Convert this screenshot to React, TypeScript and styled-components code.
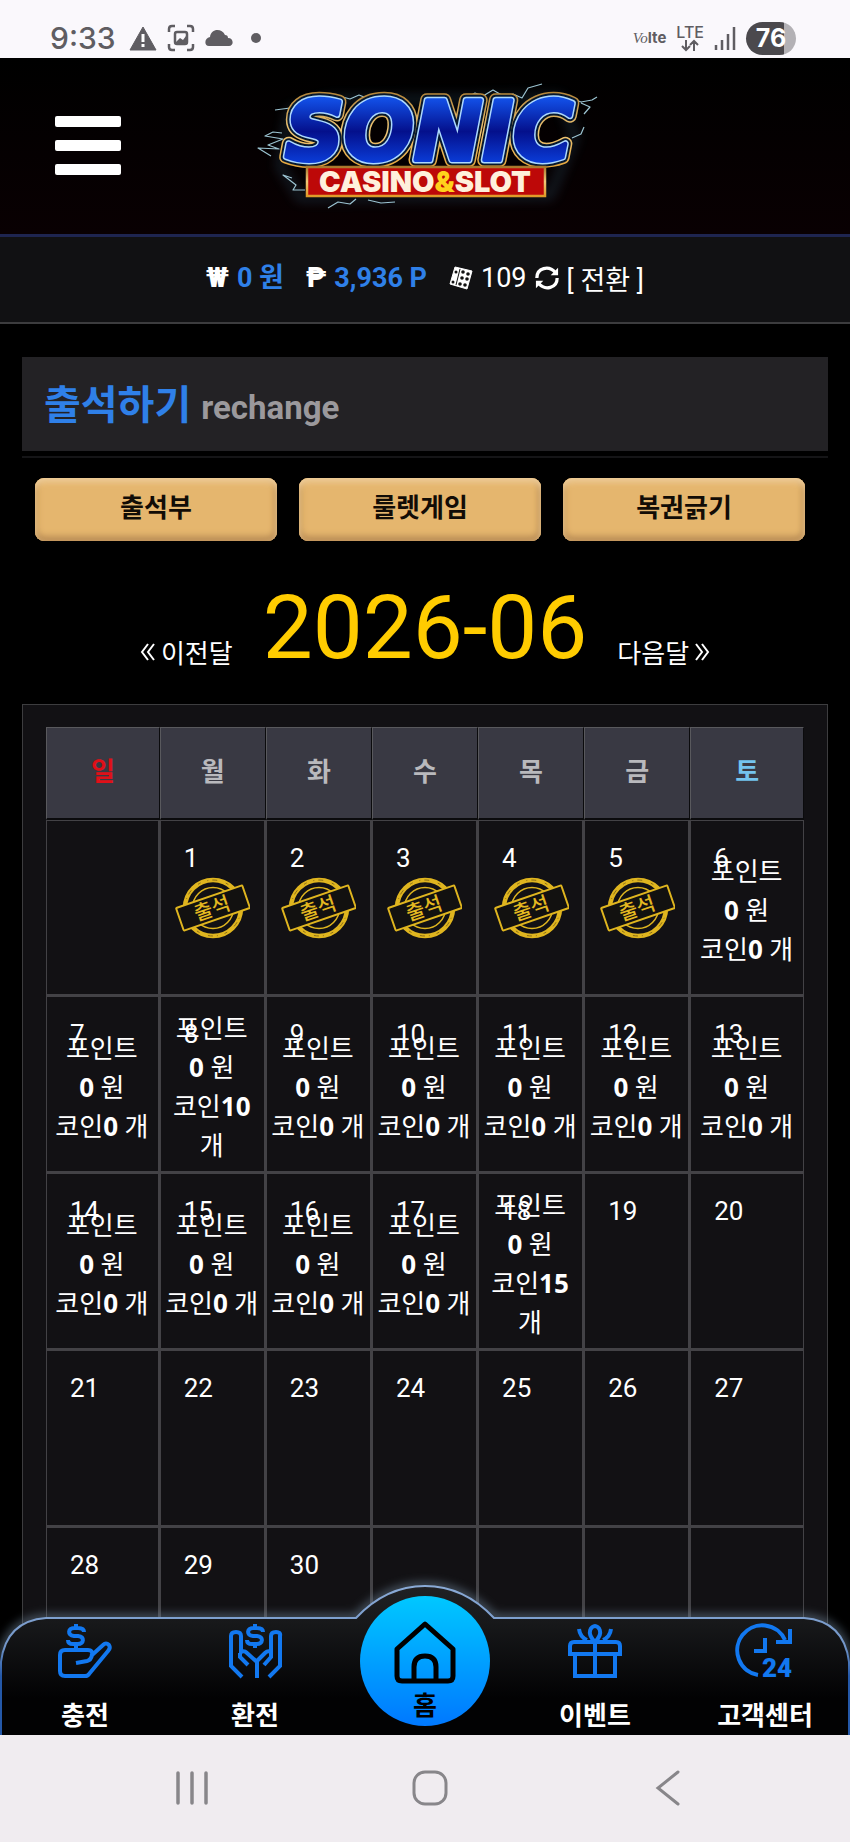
import React from "react";
import styled, { createGlobalStyle } from "styled-components";

const Global = createGlobalStyle`
  * { box-sizing: border-box; }
  body { margin: 0; background: #000; color: #fff; font: 26px/40px Roboto, "Noto Sans CJK KR", sans-serif; word-break: keep-all; }
  a { color: inherit; text-decoration: none; }
  button { font: inherit; color: inherit; background: none; border: 0; padding: 0; cursor: pointer; }
  svg { display: block; flex: none; }
`;

const Screen = styled.div`height: 100vh; display: flex; flex-direction: column; overflow: hidden;`;

const StatusBar = styled.header`
  flex: none; height: 58px; padding: 18px 54px 0 50px; display: flex; justify-content: space-between;
  align-items: center; background: #faf8fc; color: #5f5d62;
`;
const StatusGroup = styled.div`display: flex; align-items: center; gap: 10px;`;
const Clock = styled.span`font: 500 30px/40px Inter, sans-serif; margin-right: 3px;`;
const Volte = styled.span`font: 700 15px/20px Inter, sans-serif; i { font: italic 400 15px/20px "Liberation Serif", serif; }`;
const Network = styled.span`display: flex; flex-direction: column; align-items: center; font: 500 16px/14px Inter, sans-serif;`;
const Battery = styled.span`
  width: 50px; height: 33px; border-radius: 17px; display: grid; place-items: center; color: #fff;
  font: 700 25px/33px Inter, sans-serif; background: linear-gradient(90deg, #4b494d 76%, #b3b1b5 76%);
`;

const Main = styled.main`flex: 1; min-height: 0; overflow-y: auto; scrollbar-width: none;`;

const TopBar = styled.div`
  height: 179px; padding: 0 45px 0 55px; display: grid; grid-template-columns: 1fr auto 1fr; align-items: center;
  background: linear-gradient(#000, #090002); border-bottom: 3px solid #1e2550;
`;
const MenuButton = styled.button`
  width: 66px; display: flex; flex-direction: column; gap: 13px; padding-bottom: 2px;
  span { height: 11px; border-radius: 2px; background: #fff; }
`;
const Balance = styled.div`
  height: 87px; padding-bottom: 3px; display: flex; justify-content: center; align-items: center; gap: 8px;
  background: #111113; border-bottom: 2px solid #3c3c3e; font-size: 27px;
`;
const Amount = styled.strong`font-weight: 700; color: #2f80e8; margin-right: 14px;`;
const Sign = styled.b`font-weight: 900;`;
const Convert = styled.button`padding-top: 6px;`;

const Content = styled.div`padding: 33px 22px 0;`;
const TitleBox = styled.div`border-bottom: 2px solid #151517; padding-bottom: 5px;`;
const Title = styled.h1`
  margin: 0; height: 94px; padding: 0 22px; display: flex; align-items: baseline; gap: 10px;
  background: #232225; color: #2f80e8; font-size: 40px; font-weight: 700; line-height: 98px;
  small { font-size: 33px; color: #9b999c; }
`;
const Tabs = styled.nav`display: grid; grid-template-columns: repeat(3, 1fr); gap: 22px; padding: 20px 23px 0 13px;`;
const Tab = styled.button`
  height: 63px; padding-bottom: 4px; border-radius: 9px; background: #e5b66e; color: #120c06; font-weight: 700;
  box-shadow: inset 0 4px 6px #f0cf9c, inset 0 -5px 6px #bd9058, inset 4px 0 5px #d6a863, inset -4px 0 5px #c99b5b;
`;
const Month = styled.div`
  display: flex; justify-content: center; align-items: flex-end; gap: 30px; padding: 29px 0 18px;
  h2 { margin: 0; font-size: 89px; line-height: 116px; font-weight: 400; color: #fc0; }
`;
const MonthLink = styled.a`
  display: flex; align-items: center; gap: 6px; margin-bottom: 14px; font-family: "Noto Sans CJK KR", sans-serif;
`;
const CalendarBox = styled.section`border: 1px solid #3d3d3f; background: #121114; padding: 22px 23px 60px;`;
const Calendar = styled.table`width: 100%; table-layout: fixed; border-spacing: 0;`;
const DayName = styled.th<{ $tone?: string }>`
  height: 93px; padding: 0 0 3px; background: #393943; color: ${p => p.$tone || "#b9b9bd"}; font-weight: 700;
  border: 1px solid #59595d; border-right-color: #0b0b0d; border-bottom: 2px solid #0b0b0d;
`;
const DayCell = styled.td<{ $stamped?: boolean }>`
  position: relative; height: 177px; padding: ${p => (p.$stamped ? "0" : "8px 2px 0 1px")};
  text-align: center; vertical-align: middle; line-height: 39px;
  border: solid #434246; border-width: 0 2px 3px 1px;
  tr:first-child > & { border-top-width: 1px; }
  &:last-child { border-right-width: 1px; }
  b { font-family: "Noto Sans", sans-serif; line-height: 1; }
`;
const DayNumber = styled.span`position: absolute; left: 23px; top: 18px;`;
const Stamp = styled.svg`margin: 0 auto;`;

const BottomNav = styled.nav`
  position: relative; z-index: 1; flex: none; height: 151px; margin-top: -151px; display: grid;
  grid-template-columns: repeat(5, 1fr); font-weight: 700;
`;
const NavShape = styled.svg`position: absolute; inset: 0; width: 100%; height: 100%; overflow: visible;`;
const NavItem = styled.a`
  position: relative; display: flex; flex-direction: column; align-items: center; padding-top: 40px; gap: 18px;
  svg { color: #1278f0; overflow: visible; }
`;
const HomeItem = styled.a`
  position: relative; justify-self: center; margin-top: 12px; width: 130px; height: 130px; border-radius: 50%;
  display: flex; flex-direction: column; align-items: center; gap: 2px; padding-top: 24px; color: #000;
  background: linear-gradient(#00c8ff, #0078ff);
`;
const SystemBar = styled.footer`
  position: relative; z-index: 2; flex: none; height: 107px; display: grid; grid-template-columns: repeat(3, 1fr);
  place-items: center; background: #f0ecf0; color: #88868a; padding: 0 63px 2px 73px;
`;

const days = ["일", "월", "화", "수", "목", "금", "토"];
const tones: Record<string, string> = { 일: "#e01018", 토: "#74c4ee" };
const weeks = [0, 1, 2, 3, 4].map(w => days.map((_, d) => w * 7 + d));
const coins: Record<number, number> = { 8: 10, 18: 15 };

function AttendanceStamp() {
  return (
    <Stamp width="76" height="62" viewBox="0 0 76 62" fill="none" stroke="#dfb51f" role="img" aria-label="출석">
      <circle cx="39" cy="31" r="28" strokeWidth="4.5" />
      <circle cx="39" cy="31" r="28" stroke="#8a6c14" strokeWidth="1" strokeDasharray="3 7 1 4 5 9" />
      <circle cx="39" cy="31" r="20.5" strokeWidth="1.5" />
      <g transform="rotate(-19 39 31)">
        <rect x="4" y="19" width="70" height="24" rx="1" fill="#121110" strokeWidth="2" />
        <text x="38" y="38" textAnchor="middle" fontSize="20" fontWeight="500" fill="#e3b820" stroke="none">출석</text>
      </g>
    </Stamp>
  );
}

const logoOutlines: [string, number][] = [["url(#gold)", 14], ["#06182e", 11], ["#acd8ff", 7]];

function Logo() {
  return (
    <svg width="380" height="160" viewBox="0 0 380 160" role="img" aria-label="SONIC CASINO&SLOT">
      <defs>
        <linearGradient id="blue" x1="0" y1="0" x2="0" y2="1">
          <stop offset=".15" stopColor="#1250e8" /><stop offset=".5" stopColor="#04108c" /><stop offset=".85" stopColor="#0b3fdc" />
        </linearGradient>
        <linearGradient id="gold" x1="0" y1="0" x2="0" y2="1">
          <stop offset="0" stopColor="#a9782c" /><stop offset=".5" stopColor="#f0c878" /><stop offset="1" stopColor="#e09a28" />
        </linearGradient>
        <filter id="soft" x="-20%" y="-40%" width="140%" height="180%"><feGaussianBlur stdDeviation="6" /></filter>
      </defs>
      <path d="M40 100 50 45 90 34 320 32 335 70 310 130 60 132Z" fill="none" stroke="#35637e" strokeWidth="6" opacity=".4" filter="url(#soft)" />
      <g fill="none" stroke="#9cc4d2" strokeWidth="1.2" strokeLinejoin="round">
        <path d="M50 42 35 44M68 37 64 30M92 36 99 30 110 33 119 29 129 33M42 67 33 66 25 70 43 73 28 79 39 83 18 82 31 90M223 34 235 27 243 30 253 24 265 31 273 28 282 32 288 22 302 18M319 34 329 31 341 36 352 34 357 31M341 37 350 41 344 48M52 112 43 109 56 119 53 124 65 124M88 142 98 136 110 138 116 133M128 134 141 137 155 136M332 72 341 68 344 61" />
      </g>
      <g fontFamily="DejaVu Sans, sans-serif" fontWeight="700" fontStyle="italic" fontSize="82" strokeLinejoin="round">
        {logoOutlines.map(([colour, width]) => (
          <text key={colour} x="45" y="94" fill="none" stroke={colour} strokeWidth={width}>SONIC</text>
        ))}
        <text x="45" y="94" fill="url(#blue)" stroke="url(#blue)" strokeWidth="4">SONIC</text>
      </g>
      <rect x="67" y="101" width="238" height="29" fill="#bd0808" stroke="url(#gold)" strokeWidth="2.5" />
      <text x="185" y="126" textAnchor="middle" fontFamily="Inter, sans-serif" fontWeight="900" fontSize="29" fill="#fff0dc">
        CASINO<tspan fill="#ffd21c">&amp;</tspan>SLOT
      </text>
    </svg>
  );
}

function Icon({ children }: { children: React.ReactNode }) {
  return <svg width="54" height="54" viewBox="0 0 54 54" fill="none" stroke="currentColor" strokeWidth="4" aria-hidden="true">{children}</svg>;
}

function Chevrons({ next }: { next?: boolean }) {
  return (
    <svg width="15" height="18" viewBox="0 0 15 18" fill="none" stroke="currentColor" strokeWidth="2" aria-hidden="true">
      <path d={next ? "m1 1 6 8-6 8M7 1l6 8-6 8" : "M8 1 2 9l6 8M14 1 8 9l6 8"} />
    </svg>
  );
}

const dollar = "M8-4C8-7 5-8 2-8H-2C-8-8-9-1-2 0H2C9 1 8 8 2 8H-3Q-8 8-8 4M0-12V-8M0 8V12";

export default function App() {
  return (
    <Screen>
      <Global />
      <StatusBar>
        <StatusGroup>
          <Clock>9:33</Clock>
          <svg width="28" height="25" viewBox="0 0 28 25"><path d="M14 1 27 24H1Z" fill="currentColor" stroke="currentColor" strokeLinejoin="round" /><path d="M14 8v8M14 18v3" stroke="#fff" strokeWidth="3" /></svg>
          <svg width="28" height="28" viewBox="0 0 28 28" fill="none" stroke="currentColor" strokeWidth="2.5"><path d="M2 8V5q0-3 3-3h3M20 2h3q3 0 3 3v3M26 20v3q0 3-3 3h-3M8 26H5q-3 0-3-3v-3" /><rect x="8" y="8" width="12" height="12" rx="2" /><path d="m9 18 4-4 3 2 3-4v7H9Z" fill="currentColor" stroke="none" /></svg>
          <svg width="28" height="18" viewBox="0 0 28 18"><path d="M4 17C-1 17-1 9 5 8 6-1 17-1 20 6c2 0 3 1 3 3 6 0 6 8 1 8Z" fill="currentColor" /></svg>
          <svg width="26" height="12" viewBox="0 0 26 12"><circle cx="13" cy="6" r="5" fill="currentColor" /></svg>
        </StatusGroup>
        <StatusGroup>
          <Volte><i>Vo</i>lte</Volte>
          <Network>LTE<svg width="20" height="13" viewBox="0 0 20 13" fill="none" stroke="currentColor" strokeWidth="2"><path d="M6 1v10M2 7l4 4 4-4M14 12V2M10 6l4-4 4 4" /></svg></Network>
          <svg width="22" height="24" viewBox="0 0 22 24" stroke="currentColor" strokeWidth="2.5"><path d="M2 24v-5M8 24V14M14 24V8M20 24V1" /></svg>
          <Battery>76</Battery>
        </StatusGroup>
      </StatusBar>

      <Main>
        <TopBar>
          <MenuButton aria-label="메뉴"><span /><span /><span /></MenuButton>
          <a href="#home"><Logo /></a>
        </TopBar>
        <Balance>
          <Sign>₩</Sign><Amount>0 원</Amount>
          <Sign>₱</Sign><Amount>3,936 P</Amount>
          <svg width="24" height="24" viewBox="0 0 24 24"><path d="M6 1 23 5 18 23 1 18Z" fill="#fff" stroke="#fff" strokeLinejoin="round" /><path d="M11 3 7 19" stroke="#111" /><g fill="#111"><circle cx="14" cy="6" r="1.8" /><circle cx="19" cy="8" r="1.8" /><circle cx="13" cy="12" r="1.8" /><circle cx="18" cy="13" r="1.8" /><circle cx="11" cy="18" r="1.8" /><circle cx="16" cy="19" r="1.8" /><circle cx="7" cy="6" r="1.5" /><circle cx="4" cy="16" r="1.5" /></g></svg>
          <span>109</span>
          <svg width="24" height="24" viewBox="0 0 26 26" fill="none" stroke="#fff" strokeWidth="3.5"><path d="M2 13C2 2 15-1 22 7M24 13c0 11-13 14-20 6" /><path d="M25 2v8h-8ZM1 24v-8h8Z" fill="#fff" stroke="none" /></svg>
          <Convert>[ 전환 ]</Convert>
        </Balance>

        <Content>
          <TitleBox><Title>출석하기<small>rechange</small></Title></TitleBox>
          <Tabs><Tab>출석부</Tab><Tab>룰렛게임</Tab><Tab>복권긁기</Tab></Tabs>
          <Month>
            <MonthLink href="#prev"><Chevrons />이전달</MonthLink>
            <h2>2026-06</h2>
            <MonthLink href="#next">다음달<Chevrons next /></MonthLink>
          </Month>
          <CalendarBox>
            <Calendar>
              <colgroup>
                <col style={{ width: "15%" }} /><col span={5} style={{ width: "14%" }} /><col style={{ width: "15%" }} />
              </colgroup>
              <thead><tr>{days.map(d => <DayName key={d} $tone={tones[d]}>{d}</DayName>)}</tr></thead>
              <tbody>
                {weeks.map((week, i) => (
                  <tr key={i}>
                    {week.map(n => (
                      <DayCell key={n} $stamped={n > 0 && n < 6}>
                        {n > 0 && n < 31 && <DayNumber>{n}</DayNumber>}
                        {n > 0 && n < 6 && <AttendanceStamp />}
                        {n > 5 && n < 19 && <>포인트<br /><b>0</b> 원<br />코인<b>{coins[n] || 0}</b> 개</>}
                      </DayCell>
                    ))}
                  </tr>
                ))}
              </tbody>
            </Calendar>
          </CalendarBox>
        </Content>
      </Main>

      <BottomNav>
        <NavShape viewBox="0 0 850 151" preserveAspectRatio="none" aria-hidden="true">
          <defs>
            <linearGradient id="panel" x1="0" y1="0" x2="0" y2="1"><stop offset="0" stopColor="#202124" /><stop offset=".25" stopColor="#17181a" /><stop offset=".75" stopColor="#020203" /></linearGradient>
            <linearGradient id="edge" x1="0" y1="0" x2="0" y2="1"><stop offset="0" stopColor="#8aaad6" /><stop offset=".4" stopColor="#7396c8" /><stop offset=".6" stopColor="#2458a8" /></linearGradient>
            <filter id="glow" x="-5%" y="-20%" width="110%" height="140%"><feGaussianBlur stdDeviation="5" /></filter>
          </defs>
          <path d="M1 151V78Q6 37 46 34H356Q386 2 425 2T494 34H804Q844 37 849 78V151" fill="none" stroke="#7a93a8" strokeWidth="7" opacity=".6" filter="url(#glow)" />
          <path d="M1 152V78Q6 37 46 34H356Q386 2 425 2T494 34H804Q844 37 849 78V152" fill="url(#panel)" stroke="url(#edge)" strokeWidth="2" />
        </NavShape>
        <NavItem href="#deposit">
          <Icon><g transform="translate(18 12)"><path d={dollar} /></g><path d="M18 23v4M33 32 45 21q3-3 6 0 2 3-1 6L31 50q-1 2-4 2H7q-5 0-5-5V31q0-5 5-5h23q5 0 4 5-1 5-5 6l-11 2" /></Icon>
          충전
        </NavItem>
        <NavItem href="#withdraw">
          <Icon><g transform="translate(27 12)"><path d={dollar} /></g><path d="M29 54V38L19 29q-3-3-6-1V12q0-4-5-4t-5 4v30l11 11M29 37l8-8q3-3 6-1V12q0-4 5-4t4 4v30L41 53M12 29v4l8 8M43 29v4l-7 8" /></Icon>
          환전
        </NavItem>
        <HomeItem href="#home">
          <svg width="64" height="64" viewBox="0 0 64 64" fill="none" stroke="#000" strokeWidth="5" strokeLinejoin="round"><path d="M32 4 4 29v27q0 5 5 5h46q5 0 5-5V29ZM21 60V47q0-11 11-11t11 11v13" /></svg>
          홈
        </HomeItem>
        <NavItem href="#event">
          <Icon><path d="M2 30V22q0-4 4-4h42q4 0 4 4v8H2ZM7 30v22h40V30M27 18v34M27 18C17 8 24 2 27 2s10 6 0 16M11 5q1 8 8 11M43 5q-1 8-8 11" /></Icon>
          이벤트
        </NavItem>
        <NavItem href="#support">
          <Icon><path d="M20 51A25 25 0 1 1 47 16M52 5v13H38M27 14v13H16" /><text x="24" y="53" fontFamily="Roboto, sans-serif" fontSize="26" fontWeight="900" fill="currentColor" stroke="none">24</text></Icon>
          고객센터
        </NavItem>
      </BottomNav>

      <SystemBar>
        <button aria-label="최근 앱"><svg width="36" height="36" viewBox="0 0 36 36" stroke="currentColor" strokeWidth="3.5" strokeLinecap="round"><path d="M4 3v30M18 3v30M32 3v30" /></svg></button>
        <button aria-label="홈 화면"><svg width="36" height="36" viewBox="0 0 36 36" fill="none" stroke="currentColor" strokeWidth="3"><rect x="2" y="2" width="32" height="32" rx="11" /></svg></button>
        <button aria-label="뒤로"><svg width="36" height="36" viewBox="0 0 36 36" fill="none" stroke="currentColor" strokeWidth="3" strokeLinecap="round"><path d="M28 2 8 18l20 16" /></svg></button>
      </SystemBar>
    </Screen>
  );
}
